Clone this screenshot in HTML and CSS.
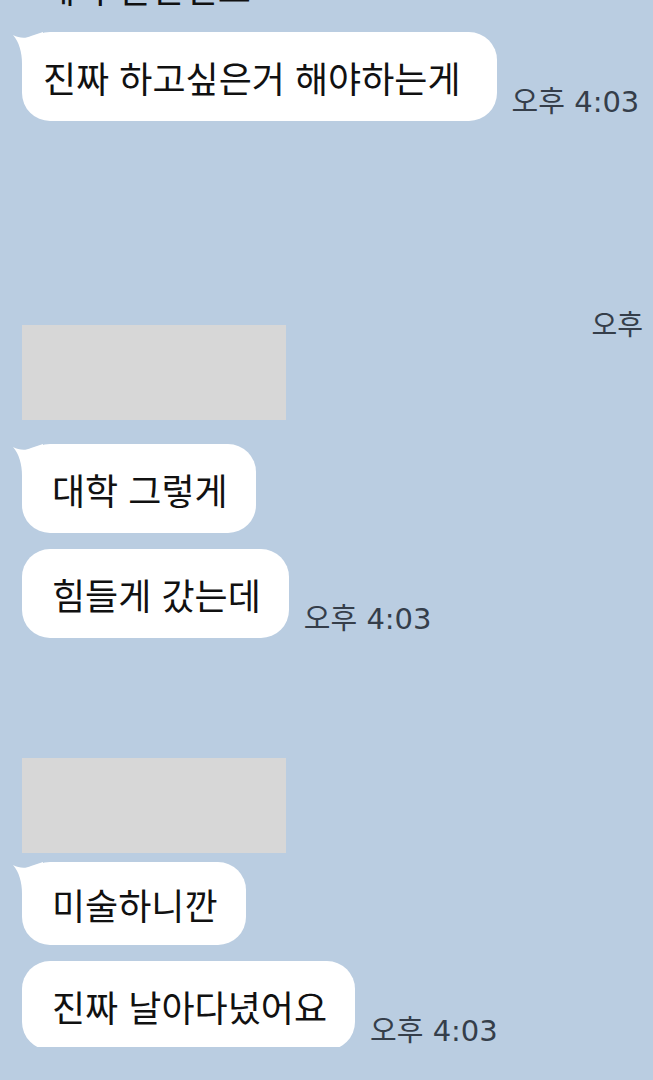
FILE: index.html
```html
<!DOCTYPE html>
<html lang="ko">
<head>
  <meta charset="UTF-8">
  <meta name="viewport" content="width=device-width, initial-scale=1.0">
  <title>채팅</title>
  <link rel="stylesheet" href="styles.css">
</head>
<body>
  <div class="chat">
    <!-- cut off line from the previous screen -->
    <div class="cut-line">제가 말한건요</div>

    <div class="row first">
      <div class="bubble tail wide">진짜 하고싶은거 해야하는게
        <svg class="tail-shape" viewBox="0 0 40 40"><path d="M0 3 C6 6 12 7 18 4 L30 0 L30 32 L9 32 C9 20 6 10 0 3 Z" fill="#fff"/></svg>
      </div>
      <span class="time">오후 4:03</span>
    </div>

    <div class="side-time">오후</div>

    <div class="photo"></div>

    <div class="row">
      <div class="bubble tail">대학 그렇게
        <svg class="tail-shape" viewBox="0 0 40 40"><path d="M0 3 C6 6 12 7 18 4 L30 0 L30 32 L9 32 C9 20 6 10 0 3 Z" fill="#fff"/></svg>
      </div>
    </div>
    <div class="row">
      <div class="bubble">힘들게 갔는데</div>
      <span class="time">오후 4:03</span>
    </div>

    <div class="photo second"></div>

    <div class="row">
      <div class="bubble tail short">미술하니깐
        <svg class="tail-shape" viewBox="0 0 40 40"><path d="M0 3 C6 6 12 7 18 4 L30 0 L30 32 L9 32 C9 20 6 10 0 3 Z" fill="#fff"/></svg>
      </div>
    </div>
    <div class="row">
      <div class="bubble">진짜 날아다녔어요</div>
      <span class="time">오후 4:03</span>
    </div>
  </div>
</body>
</html>
```

FILE: styles.css
```css
body {
  margin: 0;
  background-color: #bacde1;
  font-family: "Noto Sans CJK KR", "Noto Sans", sans-serif;
  color: #111111;
  overflow: hidden;
}

.chat {
  padding-left: 22px;
  padding-right: 10px;
  height: 1080px;
}

.cut-line {
  font-size: 36px;
  line-height: 40px;
  margin-top: -33px;
  padding-left: 20px;
  height: 40px;
}

.row {
  display: flex;
  align-items: flex-end;
  gap: 15px;
  margin-top: 16px;
}

.row.first {
  margin-top: 25px;
}

.bubble {
  position: relative;
  background-color: #ffffff;
  border-radius: 28px;
  font-size: 36px;
  line-height: 45px;
  padding: 23px 28px 21px 30px;
  white-space: nowrap;
}

.bubble.wide {
  padding-left: 21px;
  padding-right: 36px;
}

.bubble.short {
  padding-top: 20px;
  padding-bottom: 18px;
}

.tail-shape {
  position: absolute;
  left: -9px;
  top: 0;
  width: 40px;
  height: 40px;
}

.time {
  font-family: "DejaVu Sans", "Noto Sans CJK KR", sans-serif;
  font-size: 29px;
  line-height: 32px;
  color: #353e4a;
  padding-bottom: 3px;
  white-space: nowrap;
}

.side-time {
  text-align: right;
  font-size: 28px;
  line-height: 32px;
  color: #353e4a;
  margin-top: 186px;
}

.photo {
  width: 264px;
  height: 95px;
  background-color: #d7d7d7;
  margin-top: -14px;
}

.photo.second {
  margin-top: 120px;
}

.photo + .row {
  margin-top: 24px;
}

.photo.second + .row {
  margin-top: 9px;
}
```
